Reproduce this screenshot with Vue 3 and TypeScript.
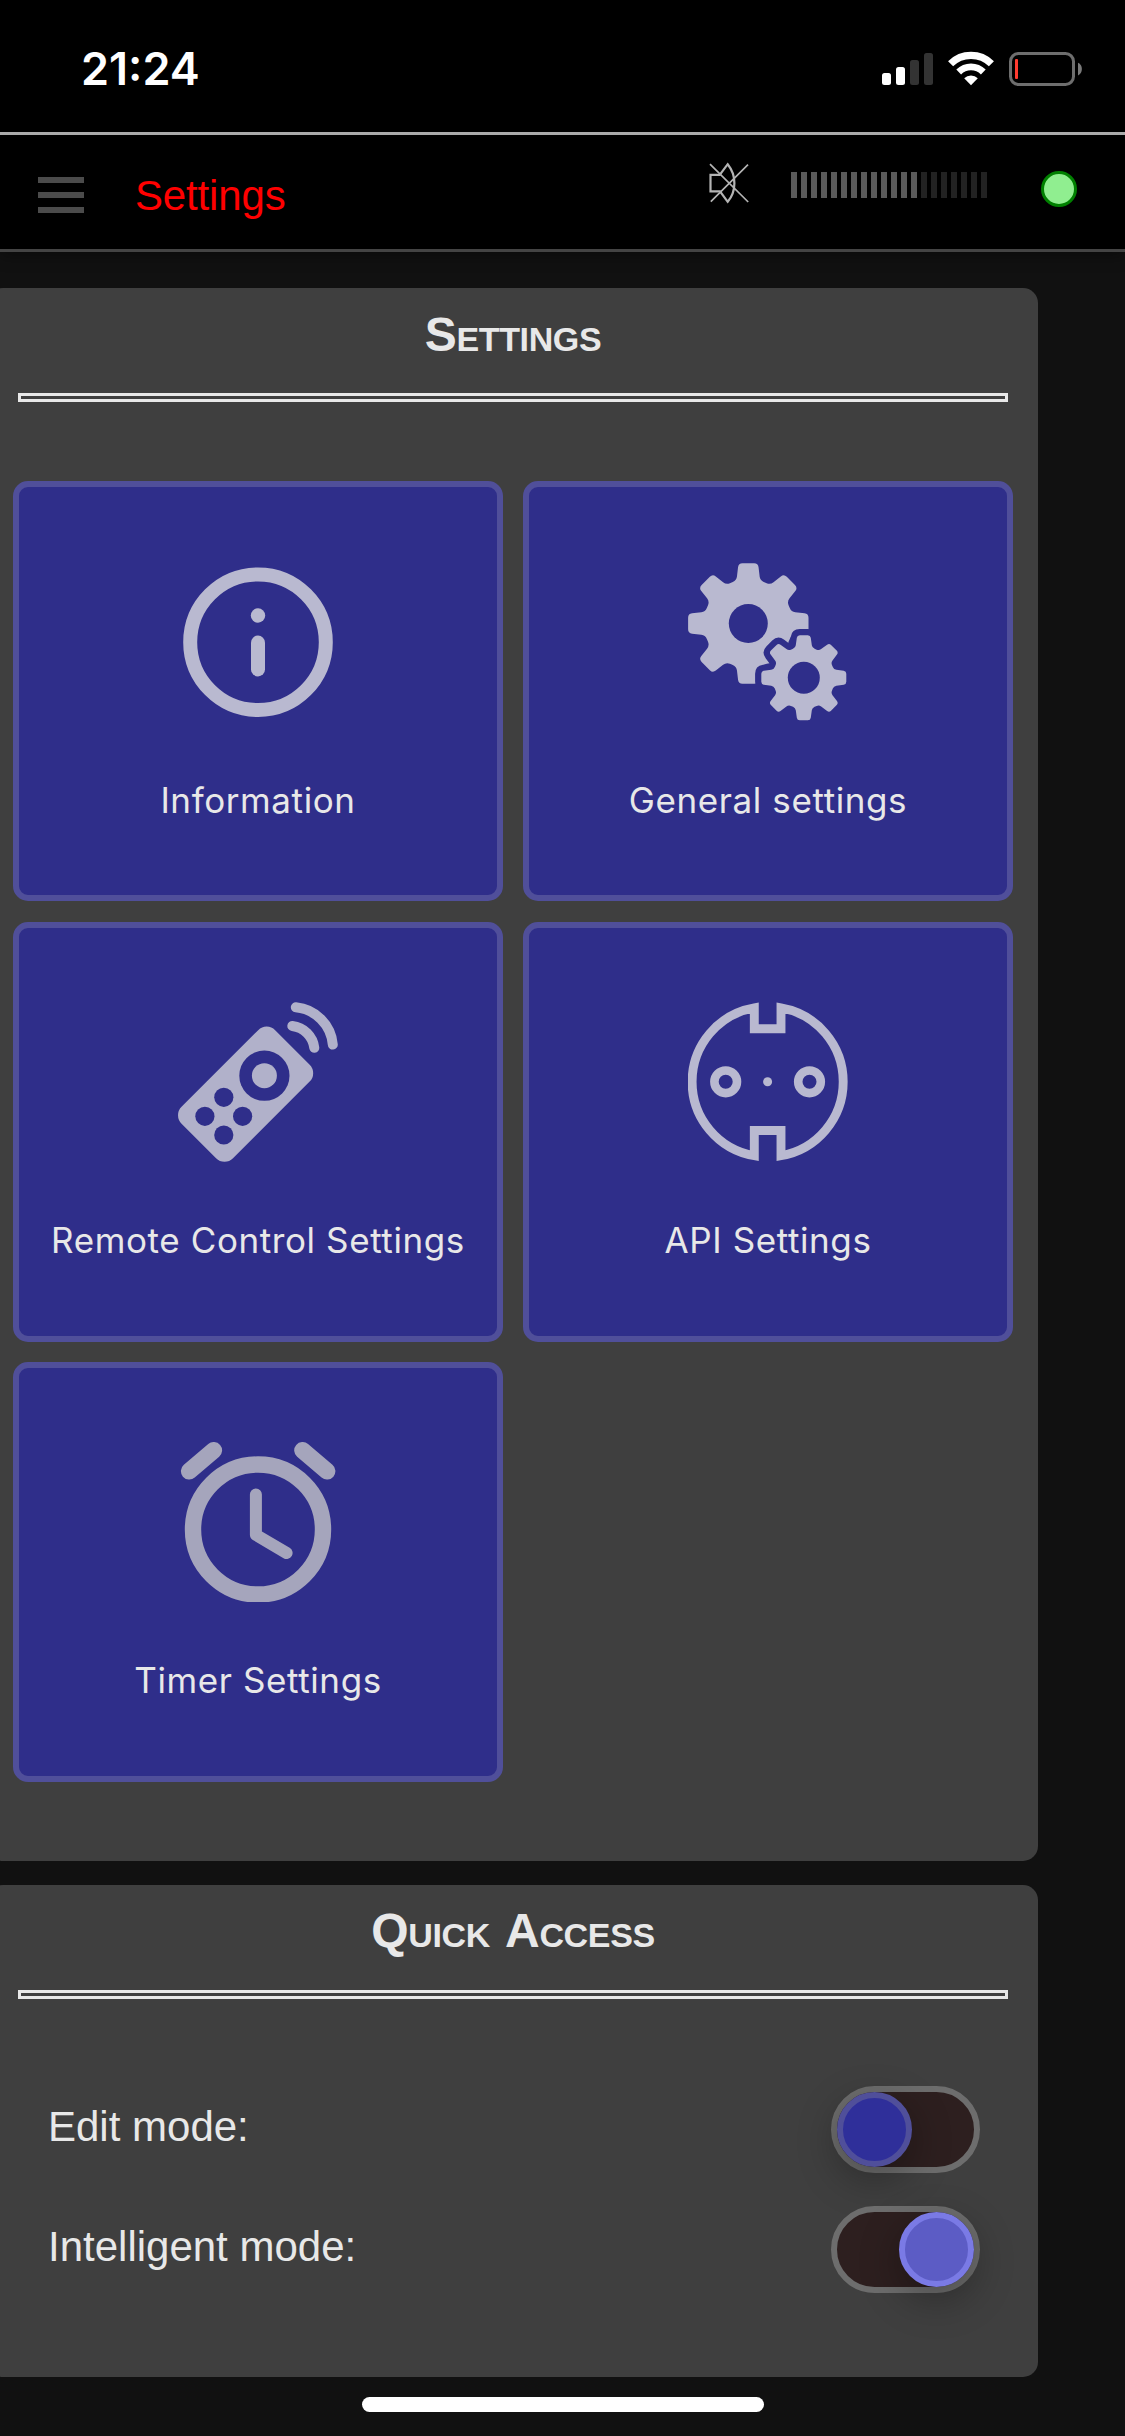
<script setup lang="ts">
import { ref } from 'vue'

type IconName = 'info' | 'gears' | 'remote' | 'socket' | 'timer'

interface Tile {
  icon: IconName
  label: string
}

interface Mode {
  label: string
  on: boolean
}

const tiles: Tile[] = [
  { icon: 'info', label: 'Information' },
  { icon: 'gears', label: 'General settings' },
  { icon: 'remote', label: 'Remote Control Settings' },
  { icon: 'socket', label: 'API Settings' },
  { icon: 'timer', label: 'Timer Settings' },
]

const modes = ref<Mode[]>([
  { label: 'Edit mode:', on: false },
  { label: 'Intelligent mode:', on: true },
])

const volumeSteps = 20
const volume = 13

/* Eight-tooth cog outline with softened corners. */
function cog(cx: number, cy: number, tipR: number, tipW: number, baseR: number, baseW: number, soft: number): string {
  const pts: [number, number][] = []
  for (let i = 0; i < 8; i++) {
    const a = (i * Math.PI) / 4
    const profile: [number, number][] = [
      [-baseW, -baseR],
      [-tipW, -tipR],
      [tipW, -tipR],
      [baseW, -baseR],
    ]
    for (const [x, y] of profile) {
      pts.push([cx + x * Math.cos(a) - y * Math.sin(a), cy + x * Math.sin(a) + y * Math.cos(a)])
    }
  }
  const toward = (from: [number, number], to: [number, number]): string => {
    const d = Math.hypot(to[0] - from[0], to[1] - from[1])
    const k = Math.min(soft, d / 2) / d
    return `${(from[0] + (to[0] - from[0]) * k).toFixed(2)} ${(from[1] + (to[1] - from[1]) * k).toFixed(2)}`
  }
  return (
    pts
      .map((p, i) => {
        const prev = pts[(i + pts.length - 1) % pts.length]
        const next = pts[(i + 1) % pts.length]
        return `${i ? 'L' : 'M'}${toward(p, prev)}Q${p[0].toFixed(2)} ${p[1].toFixed(2)} ${toward(p, next)}`
      })
      .join('') + 'Z'
  )
}

const bigCog = cog(60.3, 61.5, 60.2, 9.8, 43, 11.8, 4)
const smallCog = cog(115.8, 115.8, 42.5, 6.6, 30, 8.4, 2.6)
</script>

<template>
  <div class="screen">
    <div class="statusbar">
      <span class="clock">21:24</span>
      <svg class="indicators" width="202" height="36" viewBox="881 51 202 36">
        <rect x="882" y="73" width="9" height="12" rx="2.5" fill="#fff" />
        <rect x="896" y="67" width="9" height="18" rx="2.5" fill="#fff" />
        <rect x="910" y="60" width="9" height="25" rx="2.5" fill="#333" />
        <rect x="924" y="53" width="9" height="32" rx="2.5" fill="#333" />
        <g fill="none" stroke="#fff">
          <path d="M950.6 63.7A29 29 0 0 1 991.4 63.7" stroke-width="7.2" />
          <path d="M958.7 72A17.5 17.5 0 0 1 983.3 72" stroke-width="6.8" />
        </g>
        <path d="M964.2 78.3A9.6 9.6 0 0 1 977.8 78.3L971 85.2Z" fill="#fff" />
        <rect x="1010.5" y="53.5" width="63" height="31" rx="8" fill="none" stroke="#6e6e6e" stroke-width="3" />
        <rect x="1015" y="59" width="3" height="20" rx="1" fill="#ff3b30" />
        <path d="M1078 62.8C1083.2 64.8 1083.2 73.4 1078 75.4Z" fill="#7a7a7a" />
      </svg>
    </div>

    <header class="topbar">
      <div class="menu"><i></i><i></i><i></i></div>
      <h1>Settings</h1>
      <svg class="mute" width="42" height="42" viewBox="708 162 42 42" fill="none" stroke="#b4b4b4">
        <path d="M710.5 174.8H719.7L727.7 164.2Q734.4 172.5 734.4 183.2T727.7 201.8L720 191.3H710.5Z" stroke-width="2.2" />
        <path d="M710 164.2L748.2 202M748 164.6L710.8 201.6" stroke-width="1.7" />
      </svg>
      <div class="volume">
        <i v-for="n in volumeSteps" :key="n" :class="{ lit: n <= volume }"></i>
      </div>
      <span class="led"></span>
    </header>

    <main>
      <section class="card settings">
        <h2>Settings</h2>
        <hr />
        <div class="grid">
          <div v-for="tile in tiles" :key="tile.label" class="tile">
            <svg class="icon" :class="tile.icon" width="160" height="160" viewBox="0 0 160 160">
              <g v-if="tile.icon === 'info'">
                <circle cx="80" cy="80.2" r="67.8" fill="none" stroke="currentColor" stroke-width="14" />
                <circle cx="80" cy="53.5" r="7.2" fill="currentColor" />
                <path d="M80 80.6V107.4" stroke="currentColor" stroke-width="14" stroke-linecap="round" />
              </g>
              <g v-else-if="tile.icon === 'gears'">
                <mask id="cogs" maskUnits="userSpaceOnUse" x="0" y="0" width="160" height="160">
                  <rect width="160" height="160" fill="#fff" />
                  <circle cx="60.3" cy="61.5" r="19.5" fill="#000" />
                  <path :d="smallCog" fill="#000" stroke="#000" stroke-width="12.4" stroke-linejoin="round" />
                </mask>
                <mask id="hub" maskUnits="userSpaceOnUse" x="0" y="0" width="160" height="160">
                  <rect width="160" height="160" fill="#fff" />
                  <circle cx="115.8" cy="115.8" r="16" fill="#000" />
                </mask>
                <path :d="bigCog" fill="currentColor" mask="url(#cogs)" />
                <path :d="smallCog" fill="currentColor" mask="url(#hub)" />
              </g>
              <g v-else-if="tile.icon === 'remote'">
                <mask id="keys" maskUnits="userSpaceOnUse" x="-2" y="-2" width="164" height="164">
                  <rect x="-2" y="-2" width="164" height="164" fill="#fff" />
                  <circle cx="86.4" cy="73.7" r="25.1" />
                  <circle cx="86.4" cy="73.7" r="12.5" fill="#fff" />
                  <circle cx="45.8" cy="95.3" r="9.6" />
                  <circle cx="26.9" cy="114.3" r="9.6" />
                  <circle cx="64.6" cy="114.3" r="9.6" />
                  <circle cx="45.8" cy="133" r="9.6" />
                </mask>
                <g mask="url(#keys)">
                  <rect x="-66.2" y="-36.4" width="132.4" height="72.8" rx="12" fill="currentColor" transform="translate(67.6 92.2) rotate(-45)" />
                </g>
                <g fill="none" stroke="currentColor" stroke-width="10" stroke-linecap="round">
                  <path d="M114.3 24A25 25 0 0 1 136.3 45.8" />
                  <path d="M117.8 5.3A41 41 0 0 1 154.8 42.6" />
                </g>
              </g>
              <g v-else-if="tile.icon === 'socket'" fill="none" stroke="currentColor">
                <path d="M66.3 5.9A75 75 0 0 0 66.3 153.7V128.5H93V153.7A75 75 0 0 0 93 5.9V26.8H66.3Z" stroke-width="8.9" />
                <circle cx="37.7" cy="79.8" r="11.3" stroke-width="8.6" />
                <circle cx="121.5" cy="79.8" r="11.3" stroke-width="8.6" />
                <circle cx="79.6" cy="79.8" r="4.5" fill="currentColor" stroke="none" />
              </g>
              <g v-else fill="none" stroke="currentColor" stroke-linecap="round" stroke-linejoin="round">
                <circle cx="80" cy="87.5" r="65" stroke-width="16.4" />
                <path d="M77.9 52.5V92.8L108.6 111" stroke-width="12" />
                <path d="M35.7 8.4L11.3 29.2M124.6 8.4L149 29.2" stroke-width="16.8" />
              </g>
            </svg>
            <span class="label">{{ tile.label }}</span>
          </div>
        </div>
      </section>

      <section class="card quick">
        <h2>Quick Access</h2>
        <hr />
        <div class="modes">
          <div v-for="mode in modes" :key="mode.label" class="mode" @click="mode.on = !mode.on">
            <span>{{ mode.label }}</span>
            <div class="toggle" :class="{ on: mode.on }"><div class="knob"></div></div>
          </div>
        </div>
      </section>
    </main>

    <div class="home"></div>
  </div>
</template>

<style>
html,
body {
  background: #111;
}
</style>

<style scoped>
* {
  box-sizing: border-box;
}
.screen {
  width: 1125px;
  height: 2436px;
  display: flex;
  flex-direction: column;
  overflow: hidden;
  background: #111;
  color: #e8e8e8;
  font-family: "Liberation Sans", Arial, sans-serif;
}
.statusbar {
  height: 132px;
  flex: none;
  display: flex;
  justify-content: space-between;
  align-items: flex-start;
  padding: 0 42px 0 81px;
  background: #000;
}
.clock {
  margin-top: 42px;
  line-height: 54px;
  color: #fff;
  font-family: Inter, sans-serif;
  font-size: 45px;
  font-weight: 600;
}
.indicators {
  margin-top: 51px;
}
.topbar {
  height: 120px;
  flex: none;
  display: flex;
  align-items: flex-start;
  padding: 0 48px 0 38px;
  background: #000;
  border-top: 3px solid #aaa;
  border-bottom: 3px solid #444;
  box-shadow: 0 3px 15px rgba(0, 0, 0, 0.4);
}
.menu {
  width: 46px;
  margin-top: 42px;
  display: flex;
  flex-direction: column;
  gap: 9px;
}
.menu i {
  height: 6px;
  background: #4b4b4b;
}
.topbar h1 {
  flex: 1;
  margin: 37px 0 0 51px;
  color: #f00;
  font-size: 42px;
  font-weight: 400;
  letter-spacing: -0.15px;
  line-height: 48px;
}
.mute {
  margin-top: 27px;
}
.volume {
  display: flex;
  gap: 4px;
  margin: 37px 54px 0 41px;
}
.volume i {
  width: 6px;
  height: 26px;
  background: #222;
}
.volume .lit {
  background: #5a5a5a;
}
.led {
  width: 36px;
  height: 36px;
  margin-top: 36px;
  border: 3px solid green;
  border-radius: 50%;
  background: lightgreen;
}
main {
  display: flex;
  flex-direction: column;
  gap: 24px;
  padding-top: 36px;
}
.card {
  width: 1050px;
  margin-left: -12px;
  padding: 0 25px;
  border-radius: 15px;
  background: #3f3f3f;
}
.settings {
  height: 1573px;
}
.quick {
  height: 492px;
}
.card h2 {
  margin: 0;
  padding-top: 19px;
  height: 105px;
  text-align: center;
  font-size: 48px;
  font-variant: small-caps;
  letter-spacing: -0.35px;
  word-spacing: 4px;
  line-height: 55px;
}
.quick h2 {
  padding-top: 18px;
}
.card hr {
  height: 9px;
  margin: 0 5px;
  border: 3px solid #e8e8e8;
}
.grid {
  display: grid;
  grid-template-columns: 490px 490px;
  gap: 20.5px 20px;
  padding-top: 79px;
}
.tile {
  height: 420px;
  display: flex;
  flex-direction: column;
  align-items: center;
  padding-top: 75px;
  border: 6px solid #504f9a;
  border-radius: 15px;
  background: #2f2e8a;
}
.tile:nth-child(n + 3) {
  padding-top: 74px;
}
.icon {
  display: block;
  flex: none;
  color: #b9b9d0;
}
.remote {
  overflow: visible;
  color: #b1b1ca;
}
.timer {
  color: #a5a5bc;
}
.label {
  margin-top: 56.4px;
  font-family: Inter, sans-serif;
  font-size: 35px;
  letter-spacing: 0.6px;
  line-height: 44px;
}
.modes {
  padding: 87px 33px 0 35px;
}
.mode {
  display: flex;
  justify-content: space-between;
  height: 120px;
  font-size: 42px;
}
.mode span {
  margin-top: 17px;
  line-height: 48px;
}
.toggle {
  width: 149px;
  height: 87px;
  display: flex;
  border: 6px solid #6d6d6d;
  border-radius: 44px;
  background: #2d1f1f;
}
.knob {
  width: 75px;
  height: 75px;
  border: 6px solid #504f9a;
  border-radius: 50%;
  background: #2f2f9a;
  box-shadow: 0 12px 42px rgba(0, 0, 0, 0.32);
}
.toggle.on {
  justify-content: flex-end;
}
.on .knob {
  background: #5c5cc5;
  border-color: #7a7ae5;
}
.home {
  width: 402px;
  height: 15px;
  flex: none;
  margin: 20px 0 0 362px;
  border-radius: 8px;
  background: #fff;
}
</style>
